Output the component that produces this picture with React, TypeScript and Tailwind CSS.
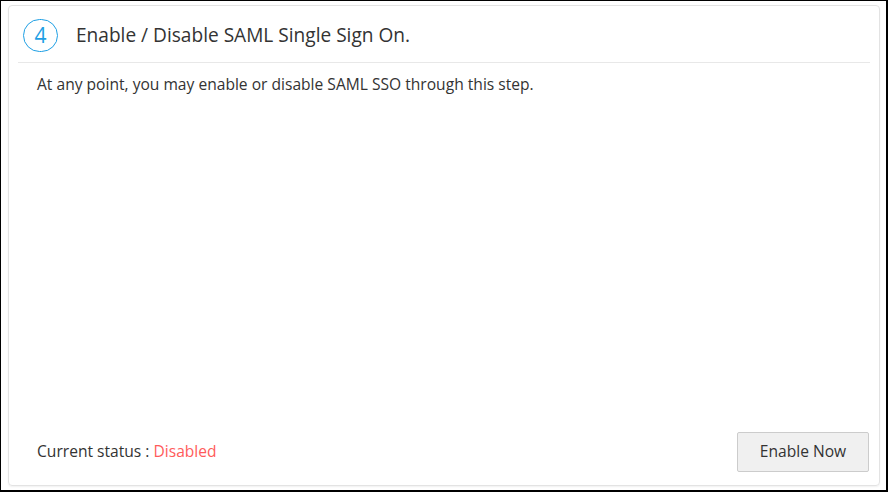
import React from "react";

export default function App() {
  return (
    <div
      className="w-[888px] h-[492px] bg-white border-t border-l border-r-2 border-b-2 border-black pt-[4px] pl-[7px] pr-[6px] pb-[4px]"
      style={{ fontFamily: '"Open Sans", "Noto Sans", sans-serif' }}
    >
      <div className="h-full flex flex-col border border-[#e3e3e3] rounded-[4px] shadow-[0_1px_2px_rgba(0,0,0,0.06)] px-[9px]">
        <div className="h-[57px] flex items-center border-b border-[#e8e8e8] pl-[5px] shrink-0 pt-[3px]">
          <div className="w-[35px] h-[33px] rounded-full border border-[#1e9fe4] flex items-center justify-center text-[#1e9fe4] text-[21px] font-normal leading-none">
            4
          </div>
          <div className="ml-[18px] text-[19.1px] text-[#333] leading-none">
            Enable / Disable SAML Single Sign On.
          </div>
        </div>
        <div className="pl-[19px] pt-[11px] text-[15.6px] leading-[21px] text-[#333]">
          At any point, you may enable or disable SAML SSO through this step.
        </div>
        <div className="mt-auto flex items-center justify-between pl-[19px] pr-[1px] pb-[13px]">
          <div className="text-[15.6px] text-[#333]">
            Current status : <span className="text-[#ff5b5b]">Disabled</span>
          </div>
          <button className="w-[132px] h-[40px] bg-[#f0f0f0] border border-[#cccccc] rounded-[2px] text-[15.6px] text-[#333]">
            Enable Now
          </button>
        </div>
      </div>
    </div>
  );
}
